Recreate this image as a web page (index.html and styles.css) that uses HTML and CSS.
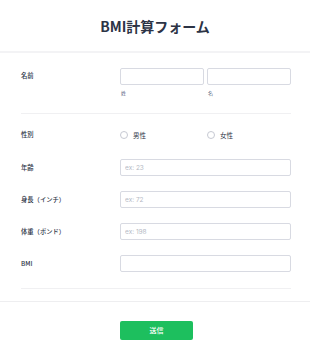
FILE: index.html
```
<!DOCTYPE html>
<html lang="ja">
<head>
    <meta charset="UTF-8">
    <title>BMI計算フォーム</title>
    <link rel="stylesheet" href="styles.css">
</head>
<body>
    <div class="form-header">
        <h1>BMI計算フォーム</h1>
    </div>

    <form class="form">
        <div class="form-body">
            <div class="row row-name">
                <label class="label">名前</label>
                <div class="name-fields">
                    <div>
                        <input type="text" class="input">
                        <span class="sublabel">姓</span>
                    </div>
                    <div>
                        <input type="text" class="input">
                        <span class="sublabel">名</span>
                    </div>
                </div>
            </div>

            <div class="row row-gender">
                <label class="label">性別</label>
                <div class="radio-group">
                    <label class="radio"><span class="radio-circle"></span>男性</label>
                    <label class="radio"><span class="radio-circle"></span>女性</label>
                </div>
            </div>

            <div class="row">
                <label class="label">年齢</label>
                <input type="text" class="input" placeholder="ex: 23">
            </div>
            <div class="row">
                <label class="label">身長（インチ）</label>
                <input type="text" class="input" placeholder="ex: 72">
            </div>
            <div class="row">
                <label class="label">体重（ポンド）</label>
                <input type="text" class="input" placeholder="ex: 198">
            </div>
            <div class="row">
                <label class="label">BMI</label>
                <input type="text" class="input">
            </div>
        </div>

        <div class="form-footer">
            <button type="submit" class="submit-btn">送信</button>
        </div>
    </form>
</body>
</html>
```

FILE: styles.css
```
body {
    margin: 0;
    background-color: white;
    font-family: "Noto Sans CJK JP", "Noto Sans", sans-serif;
    color: #2c3345;
}
.form-header {
    height: 51px;
    display: flex;
    align-items: center;
    justify-content: center;
    border-bottom: 2px solid #f3f3f5;
}
.form-header h1 {
    margin: 0;
    font-size: 14px;
    font-weight: 700;
    color: #2c3345;
}
.form-body {
    margin: 0 19px 0 21px;
    padding-bottom: 16px;
    border-bottom: 1px solid #f0f0f2;
}
.row {
    display: grid;
    grid-template-columns: 99px 1fr;
    align-items: center;
    margin-top: 15px;
}
.label {
    font-size: 6.3px;
    font-weight: 500;
    line-height: 10px;
}
.input {
    display: block;
    width: 100%;
    height: 17px;
    box-sizing: border-box;
    margin: 0;
    padding: 0 4px;
    border: 1px solid #d8dae2;
    border-radius: 2px;
    font-family: Inter, sans-serif;
    font-size: 6.5px;
    color: #2c3345;
}
.input::placeholder {
    color: #b4b9c4;
}
.row-name {
    align-items: start;
    padding-bottom: 16px;
    border-bottom: 1px solid #f0f0f2;
}
.row-name .label {
    margin-top: 3px;
}
.name-fields {
    display: grid;
    grid-template-columns: 1fr 1fr;
    gap: 3px;
}
.sublabel {
    display: block;
    margin-top: 4px;
    font-size: 5px;
    line-height: 8px;
    color: #57647e;
    padding-left: 1px;
}
.row-gender {
    margin-top: 16px;
    margin-bottom: 19px;
}
.row-gender + .row {
    margin-top: 0;
}
.radio-group {
    display: grid;
    grid-template-columns: 1fr 1fr;
    gap: 3px;
}
.radio {
    display: flex;
    align-items: center;
    gap: 5px;
    font-size: 6.5px;
    line-height: 10px;
}
.radio-circle {
    width: 8px;
    height: 8px;
    box-sizing: border-box;
    border: 1px solid #c6c9d2;
    border-radius: 50%;
}
.form-footer {
    margin-top: 12px;
    border-top: 1px solid #eeeef0;
    padding: 12px 0 0 120px;
}
.submit-btn {
    width: 73px;
    height: 19px;
    background-color: #1dbf5e;
    color: white;
    border: none;
    border-radius: 2px;
    font-family: "Noto Sans CJK JP", sans-serif;
    font-size: 7px;
    font-weight: 500;
    cursor: pointer;
}
```
